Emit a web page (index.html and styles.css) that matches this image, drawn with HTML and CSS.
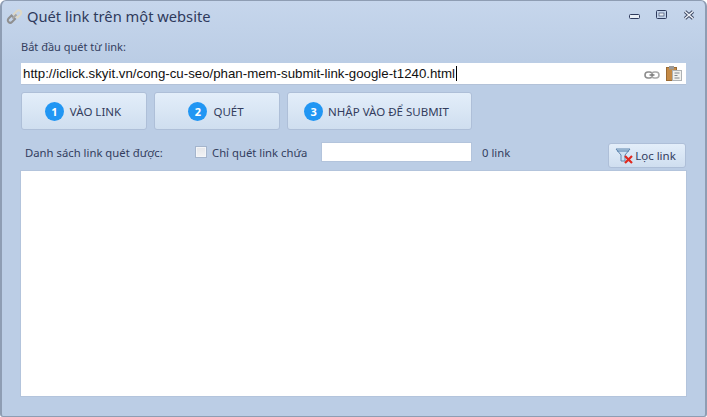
FILE: index.html
```html
<!DOCTYPE html>
<html lang="vi">
<head>
<meta charset="utf-8">
<title>Quét link trên một website</title>
<link rel="stylesheet" href="styles.css">
</head>
<body>
<div class="window">
  <header class="titlebar">
    <svg class="title-icon" width="17" height="17" viewBox="0 0 17 17" fill="none"><path d="M2.500 10.500l3-3 3.500 3.500-3 3a2.400 2.400 0 0 1-3.500-3.500z" stroke="#8f8f8f" stroke-width="2"/><path d="M8 6l3-3a2.400 2.400 0 0 1 3.500 3.500l-3 3z" stroke="#ded8c6" stroke-width="2"/><path d="M6.500 10.500l4-4" stroke="#a5a5a5" stroke-width="2"/></svg>
    <h1 class="title">Quét link trên một website</h1>
    <div class="win-controls">
      <svg class="ctl-min" width="11" height="5" viewBox="0 0 11 5"><rect x="0.500" y="0.500" width="10" height="4" rx="1" fill="#e8eef6" stroke="#2e3a5c"/></svg>
      <svg width="11" height="9" viewBox="0 0 11 9"><rect x="0.500" y="0.500" width="10" height="8" rx="1" fill="none" stroke="#2e3a5c"/><rect x="3" y="3" width="5" height="3" fill="#e8eef6" stroke="#2e3a5c" stroke-width="0.600"/></svg>
      <svg width="12" height="10" viewBox="0 0 12 10"><path d="M2 1.500l8 7M10 1.500l-8 7" stroke="#3a4560" stroke-width="3.400"/><path d="M2 1.500l8 7M10 1.500l-8 7" stroke="#eef2f8" stroke-width="1.600"/></svg>
    </div>
  </header>
  <main class="content">
    <label class="start-label">Bắt đầu quét từ link:</label>
    <div class="url-box">
      <span class="url-text">http://iclick.skyit.vn/cong-cu-seo/phan-mem-submit-link-google-t1240.html</span><span class="caret"></span>
      <span class="url-icons">
        <svg class="chain" width="16" height="8" viewBox="0 0 16 8" fill="none"><rect x="1" y="1" width="7.500" height="6" rx="3" stroke="#8d8d8d" stroke-width="1.600"/><rect x="7.500" y="1" width="7.500" height="6" rx="3" stroke="#a9a9a9" stroke-width="1.600"/><path d="M5.500 4h5" stroke="#777" stroke-width="1.400"/></svg>
        <svg width="16" height="15" viewBox="0 0 16 15"><rect x="0.500" y="1.500" width="10" height="13" fill="#c58a45" stroke="#9a6a33"/><rect x="3" y="0" width="5" height="3.500" fill="#9a9a9a"/><rect x="6.500" y="4.500" width="9" height="10" fill="#f1f1ee" stroke="#aeb2b5"/><path d="M8.500 7h5M8.500 9.500h3M8.500 12h5" stroke="#80868c"/></svg>
      </span>
    </div>
    <div class="actions">
      <button class="step step-a"><span class="num">1</span>VÀO LINK</button>
      <button class="step step-a"><span class="num">2</span>QUÉT</button>
      <button class="step step-b"><span class="num">3</span>NHẬP VÀO ĐỂ SUBMIT</button>
    </div>
    <div class="filter-row">
      <span class="list-label">Danh sách link quét được:</span>
      <span class="check"></span>
      <span class="check-label">Chỉ quét link chứa</span>
      <span class="filter-input"></span>
      <span class="count">0 link</span>
      <button class="filter-btn">
        <svg width="19" height="18" viewBox="0 0 19 18" fill="none"><path d="M1 2h14l-5 6v6H6V8z" fill="#cfe2f2" stroke="#5f86ae"/><path d="M2 4h12" stroke="#4f7ba8"/><path d="M10 9l7 7M17 9l-7 7" stroke="#e0281e" stroke-width="2.200"/></svg>
        Lọc link
      </button>
    </div>
    <div class="list"></div>
  </main>
</div>
</body>
</html>
```
FILE: styles.css
```css
* { box-sizing: border-box; }
html, body { margin: 0; padding: 0; }
body {
  width: 707px;
  height: 417px;
  overflow: hidden;
  background: #fff;
  font-family: "Noto Sans", "Open Sans", sans-serif;
  color: #333d5e;
}
.window {
  width: 707px;
  height: 417px;
  border: 1px solid #8e9db3;
  border-left-width: 2px;
  border-right-width: 2px;
  border-radius: 6px 6px 3px 3px;
  background: linear-gradient(#c6d6ec 0, #bbcde5 60px, #bbcde5 100%);
  display: flex;
  flex-direction: column;
}
.titlebar {
  height: 30px;
  display: flex;
  align-items: center;
  padding: 0 10px 0 4px;
  flex: none;
}
.title-icon { flex: none; margin-right: 4px; }
.title {
  margin: 0;
  font-size: 14.700px;
  font-weight: 400;
  color: #2f3a5c;
  flex: 1;
  white-space: nowrap;
}
.win-controls { display: flex; align-items: flex-start; gap: 16px; margin-bottom: 2px; }
.ctl-min { margin-top: 4px; }
.content {
  flex: 1;
  padding: 8px 19px 0 19px;
  display: flex;
  flex-direction: column;
}
.start-label { font-size: 11px; line-height: 16px; height: 16px; margin-bottom: 8px; white-space: nowrap; }
.url-box {
  height: 22px;
  background: #fff;
  display: flex;
  align-items: center;
  padding: 0 4px 0 2px;
  border-bottom: 1px solid #b3c2d8;
}
.url-text { font-family: "Liberation Sans", Arial, sans-serif; font-size: 13.270px; color: #111; white-space: nowrap; }
.caret { width: 1px; height: 15px; background: #000; margin-left: 1px; }
.url-icons { margin-left: auto; display: flex; align-items: center; gap: 6px; }
.chain { margin-top: 2px; }
.actions { display: flex; gap: 7px; margin-top: 7px; }
.step {
  height: 38px;
  display: flex;
  align-items: center;
  justify-content: center;
  gap: 6px;
  border: 1px solid #aebfd8;
  border-radius: 3px;
  background: linear-gradient(#e3eefa, #cfdeef);
  font-family: inherit;
  font-size: 11.500px;
  color: #333d5e;
  padding: 0 2px 0 0;
}
.step-a { width: 126px; }
.step-b { width: 185px; padding-right: 6px; gap: 5px; }
.num {
  width: 19px;
  height: 19px;
  border-radius: 50%;
  background: #2196f3;
  color: #fff;
  font-size: 11px;
  font-weight: 700;
  display: flex;
  align-items: center;
  justify-content: center;
}
.filter-row {
  display: flex;
  align-items: flex-start;
  margin-top: 13px;
  height: 28px;
  font-size: 11.300px;
}
.list-label { margin-left: 4px; width: 170px; line-height: 20px; white-space: nowrap; }
.check {
  width: 12px;
  height: 12px;
  margin-top: 3px;
  border: 1px solid #a5b5cc;
  background: linear-gradient(#e4e6ea, #f2f3f5);
  box-shadow: inset 0 0 0 1px #f4f6f9;
}
.check-label { margin-left: 5px; width: 110px; line-height: 20px; white-space: nowrap; }
.filter-input { width: 149px; height: 18px; background: #fff; box-shadow: 0 0 0 1px #b3c4dc; }
.count { margin-left: 11px; line-height: 20px; white-space: nowrap; }
.filter-btn {
  margin-left: auto;
  width: 78px;
  height: 25px;
  display: flex;
  align-items: center;
  justify-content: center;
  gap: 1px;
  padding: 0 3px 0 0;
  border: 1px solid #aebfd8;
  border-radius: 3px;
  background: linear-gradient(#e3eefa, #cfdeef);
  font-family: inherit;
  font-size: 11.500px;
  color: #333d5e;
  white-space: nowrap;
}
.list {
  height: 225px;
  background: #fff;
  box-shadow: 0 0 0 1px #b3c4dc;
}
```
